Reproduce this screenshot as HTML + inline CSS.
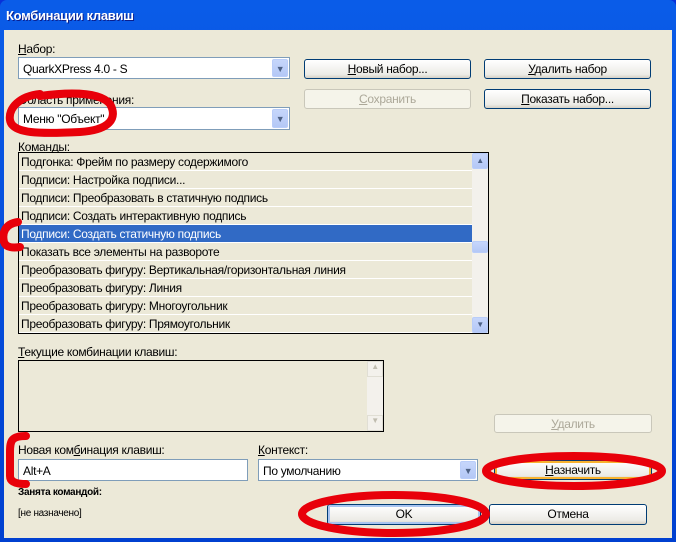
<!DOCTYPE html>
<html><head><meta charset="utf-8"><style>
*{box-sizing:border-box;margin:0;padding:0}
body{width:676px;height:542px;overflow:hidden;background:#0831d9;font-family:"Liberation Sans",sans-serif;font-size:12px;color:#000;letter-spacing:-0.3px}
.win{position:absolute;left:0;top:0;width:676px;height:542px;background:linear-gradient(#0a5ce8,#0040d0);border-radius:7px 7px 0 0}
.title{position:absolute;left:6px;top:8px;color:#fff;font-weight:bold;font-size:13px;text-shadow:1px 1px #0a1e8c}
.a{position:absolute}
.lbl{position:absolute;white-space:nowrap}
.combo{position:absolute;background:#fff;border:1px solid #7f9db9;padding:4px 4px 2px;white-space:nowrap}
.arr{position:absolute;right:1px;top:1px;bottom:1px;width:16px;background:linear-gradient(#c6d6fb,#b4c8f6);border:1px solid #b9cdf9;border-radius:2px;color:#4d6185;font-size:9px;text-align:center;line-height:18px}
.btn{position:absolute;border:1px solid #003c74;border-radius:3px;background:linear-gradient(#fff,#ecebe6 80%,#d6d0c5);text-align:center;line-height:19px;white-space:nowrap}
.dis{border-color:#c9c7ba;color:#aca899;background:#f5f4ea}
.list{position:absolute;left:18px;top:152px;width:471px;height:182px;border:1px solid #000;background:#fff;overflow:hidden}
.row{height:18px;line-height:19px;padding-left:2px;background:#ece9d8;border-bottom:1px solid #fff;width:453px;white-space:nowrap}
.sel{background:#316ac5;color:#fff}
.sb{position:absolute;right:0;top:0;width:16px;height:180px;background:#f3f1ec}
.sbb{position:absolute;left:0;width:16px;height:16px;background:linear-gradient(#c6d6fb,#b4c8f6);border:1px solid #b9cdf9;border-radius:2px;font-size:8px;color:#4d6185;text-align:center;line-height:14px}
u{text-decoration:underline}
</style></head><body>
<div class="win">
<div class="title">Комбинации клавиш</div>
</div>
<div class="a" style="left:4px;top:30px;width:668px;height:508px;background:#ece9d8"></div>

<div class="lbl" style="left:18px;top:42px"><u>Н</u>абор:</div>
<div class="combo" style="left:18px;top:57px;width:272px;height:22px">QuarkXPress 4.0 - S<div class="arr">▼</div></div>
<div class="btn" style="left:304px;top:59px;width:167px;height:20px"><u>Н</u>овый набор...</div>
<div class="btn" style="left:484px;top:59px;width:167px;height:20px"><u>У</u>далить набор</div>

<div class="lbl" style="left:18px;top:93px">Область применения:</div>
<div class="btn dis" style="left:304px;top:89px;width:167px;height:20px"><u>С</u>охранить</div>
<div class="btn" style="left:484px;top:89px;width:167px;height:20px"><u>П</u>оказать набор...</div>
<div class="combo" style="left:18px;top:107px;width:272px;height:23px">Меню "Объект"<div class="arr">▼</div></div>

<div class="lbl" style="left:18px;top:140px"><u>К</u>оманды:</div>
<div class="list">
<div class="row">Подгонка: Фрейм по размеру содержимого</div>
<div class="row">Подписи: Настройка подписи...</div>
<div class="row">Подписи: Преобразовать в статичную подпись</div>
<div class="row">Подписи: Создать интерактивную подпись</div>
<div class="row sel">Подписи: Создать статичную подпись</div>
<div class="row">Показать все элементы на развороте</div>
<div class="row">Преобразовать фигуру: Вертикальная/горизонтальная линия</div>
<div class="row">Преобразовать фигуру: Линия</div>
<div class="row">Преобразовать фигуру: Многоугольник</div>
<div class="row">Преобразовать фигуру: Прямоугольник</div>
<div class="sb"><div class="sbb" style="top:0">▲</div><div class="sbb" style="top:88px;height:12px"></div><div class="sbb" style="bottom:0">▼</div></div>
</div>

<div class="lbl" style="left:18px;top:345px"><u>Т</u>екущие комбинации клавиш:</div>
<div class="a" style="left:18px;top:360px;width:366px;height:72px;border:1px solid #000;background:#ece9d8">
<div class="a" style="right:0;top:0;width:16px;height:70px;background:#f3f1ec"><div class="a" style="left:0;top:0;width:16px;height:16px;border:1px solid #e0ded4;color:#c0bdb0;font-size:8px;text-align:center">▲</div><div class="a" style="left:0;bottom:0;width:16px;height:16px;border:1px solid #e0ded4;color:#c0bdb0;font-size:8px;text-align:center">▼</div></div>
</div>
<div class="btn dis" style="left:494px;top:414px;width:158px;height:19px"><u>У</u>далить</div>

<div class="lbl" style="left:18px;top:443px">Новая ком<u>б</u>инация клавиш:</div>
<div class="combo" style="left:18px;top:459px;width:230px;height:22px">Alt+A</div>
<div class="lbl" style="left:258px;top:443px"><u>К</u>онтекст:</div>
<div class="combo" style="left:258px;top:459px;width:220px;height:22px">По умолчанию<div class="arr">▼</div></div>
<div class="btn" style="left:494px;top:460px;width:158px;height:20px;border-color:#003c74;box-shadow:inset 0 0 0 2px #f8b330"><u>Н</u>азначить</div>

<div class="lbl" style="left:18px;top:487px;font-weight:bold;font-size:10px">Занята командой:</div>
<div class="lbl" style="left:18px;top:508px;font-size:10px">[не назначено]</div>
<div class="btn" style="left:327px;top:504px;width:154px;height:21px;box-shadow:inset 0 0 0 2px #a8c4f0">OK</div>
<div class="btn" style="left:489px;top:504px;width:158px;height:21px">Отмена</div>

<svg class="a" style="left:0;top:0" width="676" height="542" fill="none" stroke="#e8000a" stroke-width="8" stroke-linecap="round">
<path d="M40 94 C20 96 8 108 10 120 C12 134 40 134 80 132 C110 130 118 118 110 104 C100 92 70 92 40 96"/>
<path d="M18 222 C4 224 2 234 4 242 C6 248 14 248 20 247"/>
<path d="M26 436 C12 436 10 440 10 452 L10 476 C10 482 16 484 26 484"/>
<ellipse cx="574" cy="471" rx="88" ry="15"/>
<ellipse cx="394" cy="514" rx="92" ry="19"/>
</svg>
</body></html>
